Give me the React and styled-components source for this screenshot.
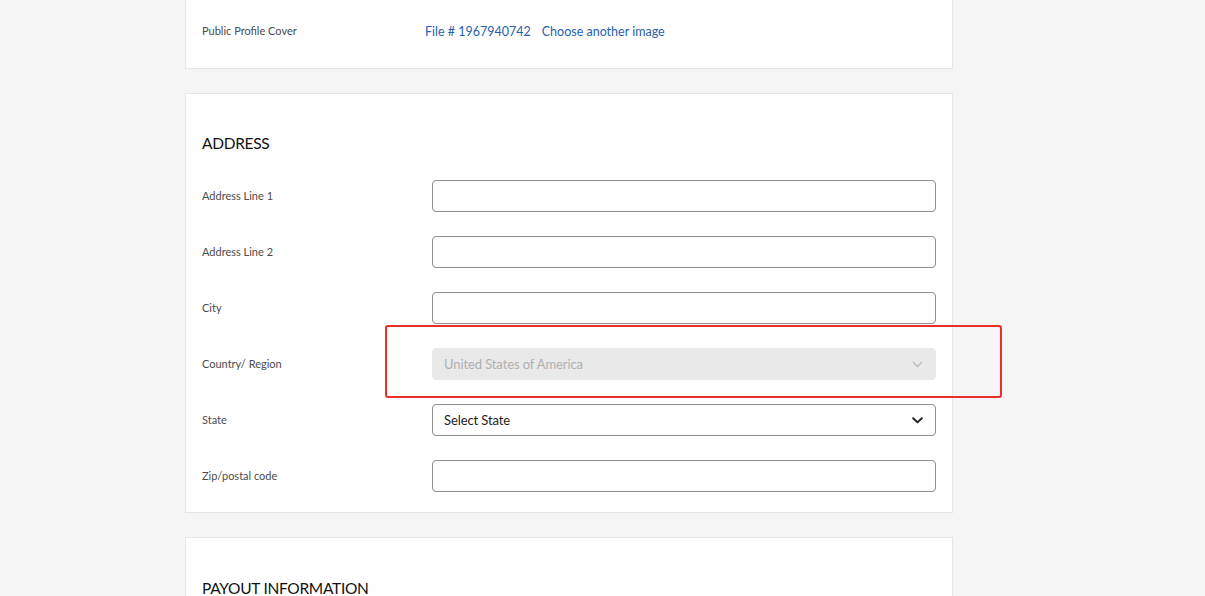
import React from "react";
import styled, { createGlobalStyle } from "styled-components";

const GlobalStyle = createGlobalStyle`
  html, body {
    margin: 0;
    padding: 0;
    background: #f5f5f5;
    font-family: Lato, "Open Sans", sans-serif;
    overflow: hidden;
  }
`;

const Page = styled.div`
  position: relative;
  width: 1205px;
  height: 596px;
  overflow: hidden;
`;

const Column = styled.div`
  width: 768px;
  margin-left: 185px;
  margin-top: -5px;
  display: flex;
  flex-direction: column;
  gap: 24px;
`;

const Card = styled.section`
  background: #fff;
  border: 1px solid #e6e6e6;
  box-sizing: border-box;
  padding: ${(p) => p.$pad || "0 16px"};
`;

const Heading = styled.h2`
  margin: 0 0 27px;
  font-size: 15.5px;
  font-weight: 400;
  color: #111;
  line-height: 20px;
  letter-spacing: -0.3px;
`;

const Row = styled.div`
  display: grid;
  grid-template-columns: ${(p) => p.$label || "230px"} 1fr;
  align-items: center;
  height: ${(p) => p.$h || "32px"};
  padding-bottom: ${(p) => p.$lift || "0"};
  margin-bottom: 24px;
  &:last-child {
    margin-bottom: 0;
  }
`;

const Label = styled.label`
  font-size: 11px;
  line-height: 13px;
  padding-bottom: 1px;
  color: #4b4b4b;
`;

const Links = styled.div`
  display: flex;
  gap: 11px;
`;

const Link = styled.a`
  font-size: 12.5px;
  color: #1f5fae;
  text-decoration: none;
  cursor: pointer;
`;

const Input = styled.input`
  box-sizing: border-box;
  width: 100%;
  height: 32px;
  border: 1px solid #8f8f8f;
  border-radius: 4px;
  background: #fff;
  font-family: inherit;
  font-size: 14px;
  padding: 0 12px;
  outline: none;
`;

const SelectBox = styled.div`
  box-sizing: border-box;
  height: 32px;
  border-radius: 4px;
  display: flex;
  align-items: center;
  justify-content: space-between;
  padding: 0 12px 0 11px;
  font-size: 13px;
  letter-spacing: -0.1px;
  border: 1px solid ${(p) => (p.$disabled ? "#e9e9e9" : "#8f8f8f")};
  background: ${(p) => (p.$disabled ? "#e9e9e9" : "#fff")};
  color: ${(p) => (p.$disabled ? "#b0b0b0" : "#222")};
  svg {
    color: ${(p) => (p.$disabled ? "#bcbcbc" : "#222")};
  }
`;

const Highlight = styled.div`
  position: absolute;
  left: 385px;
  top: 325px;
  width: 617px;
  height: 73px;
  box-sizing: border-box;
  border: 2.5px solid #ec2e28;
  border-radius: 3px;
  pointer-events: none;
`;

const Chevron = ({ w = 2 }) => (
  <svg width="11" height="7" viewBox="0 0 11 7" fill="none">
    <path
      d="M1.2 1.2 L5.5 5.4 L9.8 1.2"
      stroke="currentColor"
      strokeWidth={w}
      strokeLinecap="round"
      strokeLinejoin="round"
    />
  </svg>
);

const fields = [
  { label: "Address Line 1" },
  { label: "Address Line 2" },
  { label: "City" },
  { label: "Country/ Region", select: "United States of America", disabled: true },
  { label: "State", select: "Select State" },
  { label: "Zip/postal code" },
];

export default function App() {
  return (
    <Page>
      <GlobalStyle />
      <Column>
        <Card $pad="0 16px">
          <Row $label="223px" $h="70px" $lift="2px">
            <Label>Public Profile Cover</Label>
            <Links>
              <Link>File # 1967940742</Link>
              <Link>Choose another image</Link>
            </Links>
          </Row>
        </Card>

        <Card $pad="39px 16px 20px">
          <Heading>ADDRESS</Heading>
          {fields.map((f) => (
            <Row key={f.label}>
              <Label>{f.label}</Label>
              {f.select ? (
                <SelectBox $disabled={f.disabled}>
                  <span>{f.select}</span>
                  <Chevron w={f.disabled ? 1.4 : 2} />
                </SelectBox>
              ) : (
                <Input type="text" />
              )}
            </Row>
          ))}
        </Card>

        <Card $pad="40px 16px 20px">
          <Heading>PAYOUT INFORMATION</Heading>
        </Card>
      </Column>
      <Highlight />
    </Page>
  );
}
